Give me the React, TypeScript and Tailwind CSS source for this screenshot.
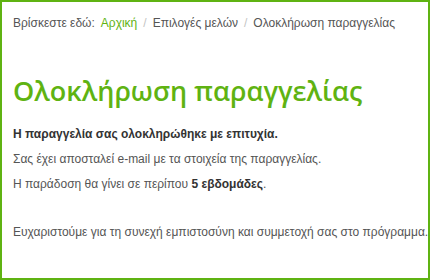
export default function App() {
  return (
    <div className="w-[430px] h-[280px] overflow-hidden border-2 border-[#5fb312] bg-white pl-[11px] font-['Liberation_Sans',Arial,sans-serif] text-[12px] text-[#555] whitespace-nowrap">
      <nav className="pt-[11px] leading-[20px] flex items-center">
        <span>Βρίσκεστε εδώ:</span>
        <span className="ml-[6px] text-[#5fb312]">Αρχική</span>
        <span className="mx-[6px] text-[#c4c4c4]">/</span>
        <span>Επιλογές μελών</span>
        <span className="mx-[6px] text-[#c4c4c4]">/</span>
        <span>Ολοκλήρωση παραγγελίας</span>
      </nav>
      <h1 className="mt-[40px] text-[27px] leading-[36px] font-['Open_Sans',sans-serif] font-semibold text-[#5fb312]">
        Ολοκλήρωση παραγγελίας
      </h1>
      <div className="mt-[13px] leading-[25px]">
        <p className="font-bold text-[#333]">Η παραγγελία σας ολοκληρώθηκε με επιτυχία.</p>
        <p>Σας έχει αποσταλεί e-mail με τα στοιχεία της παραγγελίας.</p>
        <p>
          Η παράδοση θα γίνει σε περίπου <b className="text-[#333]">5 εβδομάδες</b>.
        </p>
        <p className="mt-[23px]">Ευχαριστούμε για τη συνεχή εμπιστοσύνη και συμμετοχή σας στο πρόγραμμα.</p>
      </div>
    </div>
  );
}
